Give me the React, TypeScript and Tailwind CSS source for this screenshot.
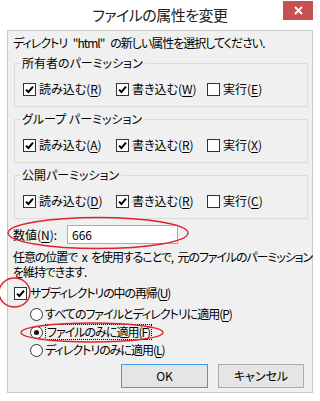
import React from "react";

type Perm = { label: string; key: string; checked: boolean };

const groups: { title: string; items: Perm[] }[] = [
  {
    title: "所有者のパーミッション",
    items: [
      { label: "読み込む", key: "R", checked: true },
      { label: "書き込む", key: "W", checked: true },
      { label: "実行", key: "E", checked: false },
    ],
  },
  {
    title: "グループ パーミッション",
    items: [
      { label: "読み込む", key: "A", checked: true },
      { label: "書き込む", key: "R", checked: true },
      { label: "実行", key: "X", checked: false },
    ],
  },
  {
    title: "公開パーミッション",
    items: [
      { label: "読み込む", key: "D", checked: true },
      { label: "書き込む", key: "R", checked: true },
      { label: "実行", key: "C", checked: false },
    ],
  },
];

function CheckBox({ checked }: { checked: boolean }) {
  return (
    <span className="flex h-[13px] w-[13px] shrink-0 items-center justify-center border border-[#333] bg-white">
      {checked && (
        <svg width="9" height="9" viewBox="0 0 9 9">
          <path d="M1 4.6 L3.4 7 L8 1.6" stroke="#000" strokeWidth="2" fill="none" />
        </svg>
      )}
    </span>
  );
}

function Radio({ checked }: { checked: boolean }) {
  return (
    <span className="flex h-[13px] w-[13px] shrink-0 items-center justify-center rounded-full border border-[#333] bg-white">
      {checked && <span className="h-[5px] w-[5px] rounded-full bg-[#111]" />}
    </span>
  );
}

function Key({ k }: { k: string }) {
  return (
    <>
      (<span className="underline underline-offset-2">{k}</span>)
    </>
  );
}

function Group({ title, items }: { title: string; items: Perm[] }) {
  return (
    <fieldset className="ml-[1px] mr-[4px] border border-[#dcdcdc] px-[8px] pt-[10px] pb-[9px]">
      <legend className="ml-[-3px] px-[2px] leading-[16px]">{title}</legend>
      <div className="flex h-[16px] items-center">
        {items.map((it, i) => (
          <label
            key={i}
            className={
              "flex items-center gap-[3px] " + (i === 0 ? "w-[93px]" : i === 1 ? "w-[91px]" : "")
            }
          >
            <CheckBox checked={it.checked} />
            <span>
              {it.label}
              <Key k={it.key} />
            </span>
          </label>
        ))}
      </div>
    </fieldset>
  );
}

export default function App() {
  return (
    <div className="relative h-[401px] w-[320px] overflow-hidden bg-white font-['Noto_Sans_CJK_JP',sans-serif] text-[12px] leading-[16px] text-black [font-feature-settings:'palt']">
      {/* title bar */}
      <div className="relative flex h-[30px] items-center justify-center">
        <span className="text-[15px] tracking-[-0.5px] text-[#222]">ファイルの属性を変更</span>
        <button className="absolute top-[1px] right-[7px] flex h-[19px] w-[30px] items-center justify-center bg-[#c75050]">
          <svg width="9" height="9" viewBox="0 0 9 9">
            <path d="M1 1 L8 8 M8 1 L1 8" stroke="#fff" strokeWidth="2" />
          </svg>
        </button>
      </div>

      {/* client */}
      <div className="mx-[7px] flex h-[363px] flex-col border border-[#c9c9c9] bg-[#f0f0f0] pt-[4px] pl-[5px]">
        <p className="tracking-[-1px] [word-spacing:4px]">
          ディレクトリ "html" の新しい属性を選択してください.
        </p>

        <div className="mt-[4px] flex flex-col gap-[4px]">
          {groups.map((g) => (
            <Group key={g.title} title={g.title} items={g.items} />
          ))}
        </div>

        <div className="mt-[6px] flex items-center">
          <span className="w-[54px]">
            数値<Key k="N" />:
          </span>
          <div className="flex h-[19px] w-[111px] items-center border border-[#abadb3] bg-white px-[4px]">
            666
          </div>
        </div>

        <p className="mt-[5px] leading-[15px] tracking-[-1.1px] whitespace-nowrap [word-spacing:3px]">
          任意の位置で x を使用することで, 元のファイルのパーミッション
          <br />
          を維持できます.
        </p>

        <label className="mt-[6px] ml-[1px] flex items-center gap-[3px]">
          <CheckBox checked />
          <span className="tracking-[-1.1px]">
            サブディレクトリの中の再帰<Key k="U" />
          </span>
        </label>

        <div className="mt-[4px] ml-[17px] flex flex-col tracking-[-1px]">
          <label className="flex h-[18px] items-center gap-[2px]">
            <Radio checked={false} />
            <span>
              すべてのファイルとディレクトリに適用<Key k="P" />
            </span>
          </label>
          <label className="flex h-[18px] items-center gap-[2px]">
            <Radio checked />
            <span className="border border-dotted border-black px-[1px] leading-[14px]">
              ファイルのみに適用<Key k="F" />
            </span>
          </label>
          <label className="flex h-[18px] items-center gap-[2px]">
            <Radio checked={false} />
            <span>
              ディレクトリのみに適用<Key k="L" />
            </span>
          </label>
        </div>

        <div className="mt-[5px] mr-[8px] flex justify-end gap-[10px]">
          <button className="h-[24px] w-[87px] border border-[#3c9be8] bg-[#e5e5e5]">OK</button>
          <button className="h-[24px] w-[86px] border border-[#acacac] bg-[#e5e5e5]">キャンセル</button>
        </div>
      </div>

      {/* red annotation marks */}
      <svg className="pointer-events-none absolute top-0 left-0" width="320" height="401">
        <g fill="none" stroke="#e0232b" strokeWidth="1.4">
          <ellipse cx="98" cy="233" rx="90" ry="15.5" />
          <ellipse cx="14.5" cy="292.5" rx="15.5" ry="14.5" />
          <ellipse cx="92" cy="332.5" rx="71" ry="9.5" />
        </g>
      </svg>
    </div>
  );
}
